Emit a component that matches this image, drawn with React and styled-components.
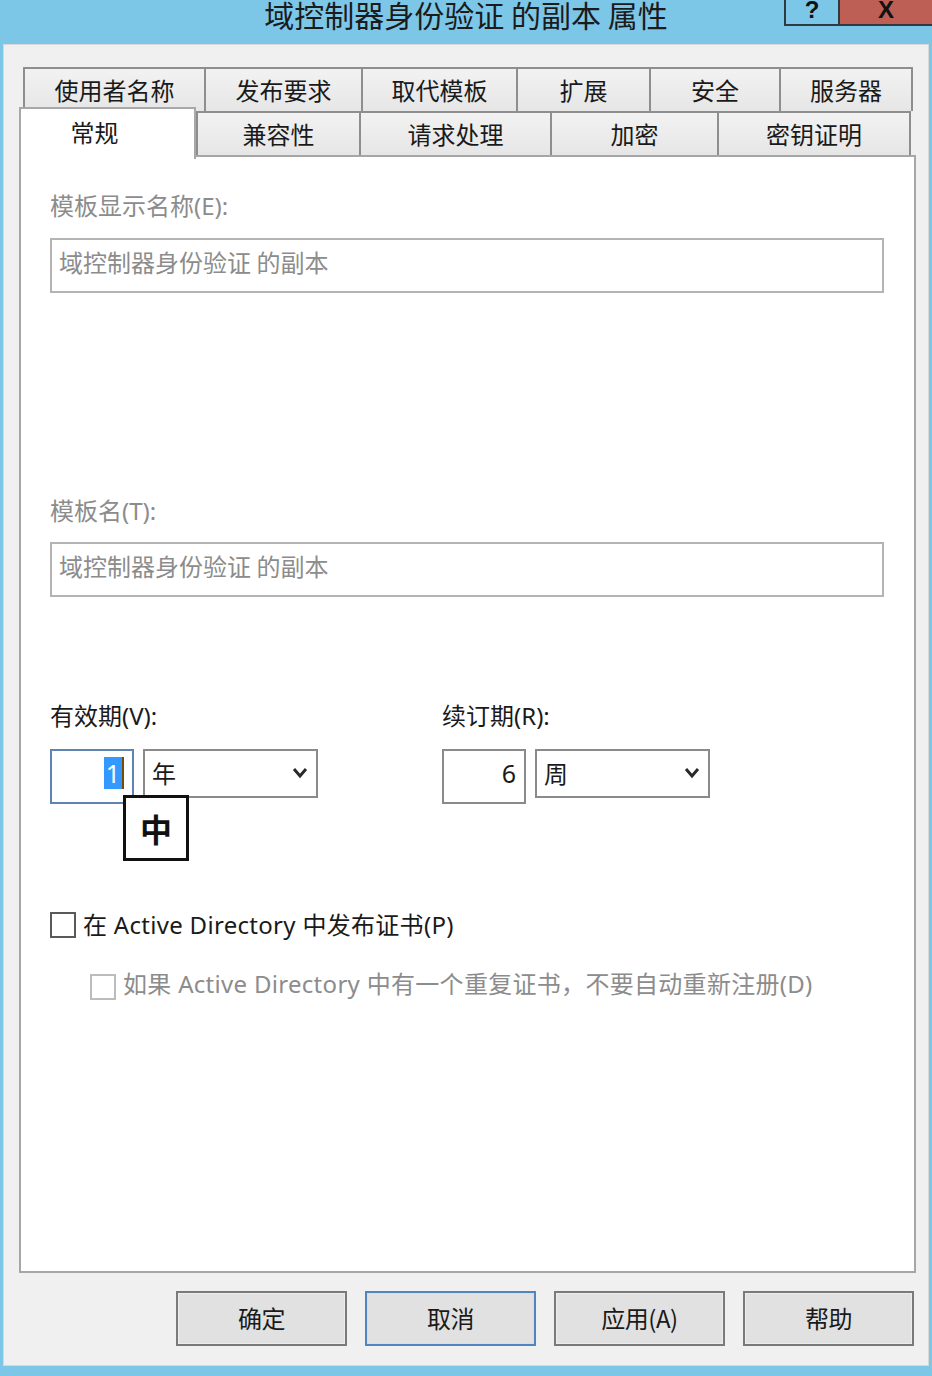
import React from 'react'
import styled, { createGlobalStyle } from 'styled-components'

const GlobalStyle = createGlobalStyle`
  html, body {
    margin: 0;
    padding: 0;
    background: #7cc7e8;
  }
  body {
    font-family: "Noto Sans", "Noto Sans CJK SC", sans-serif;
  }
`

const Window = styled.div`
  width: 932px;
  height: 1376px;
  display: flex;
  flex-direction: column;
  background: #7cc7e8;
  overflow: hidden;
`

const TitleBar = styled.div`
  height: 44px;
  position: relative;
  display: flex;
  justify-content: center;
`

const TitleText = styled.div`
  font-family: "Noto Sans CJK SC", sans-serif;
  font-size: 30px;
  line-height: 30px;
  color: #1b1b1b;
  margin-top: -1px;
`

const Caption = styled.div`
  position: absolute;
  top: -3px;
  right: 0;
  display: flex;
`

const CaptionButton = styled.div`
  width: ${(p) => p.w}px;
  height: 29px;
  box-sizing: border-box;
  background: ${(p) => (p.close ? '#bd5f55' : '#7cc7e8')};
  border: 2px solid #2e3a40;
  border-left-width: ${(p) => (p.close ? '0' : '2px')};
  border-right-width: ${(p) => (p.close ? '0' : '2px')};
  display: flex;
  align-items: flex-start;
  justify-content: center;
  font-family: "Liberation Sans", sans-serif;
  font-weight: bold;
  font-size: 24px;
  line-height: 22px;
  color: #111;
`

const Client = styled.div`
  flex: 1;
  margin: 0 3px 10px 3px;
  background: #f0f0f0;
  border: 1px solid #d8d8d8;
  display: flex;
  flex-direction: column;
`

const TabStrip = styled.div`
  margin-top: 22px;
  padding-left: 15px;
  display: flex;
  flex-direction: column;
`

const TabRow = styled.div`
  display: flex;
  padding-left: ${(p) => p.indent || 0}px;
  position: relative;
  z-index: ${(p) => p.z || 0};
`

const Tab = styled.div`
  width: ${(p) => p.w}px;
  height: 44px;
  box-sizing: border-box;
  border: 2px solid #8e8e8e;
  border-bottom: none;
  margin-left: ${(p) => (p.first ? '0' : '-2px')};
  background: linear-gradient(#f2f2f2, #e6e6e6);
  font-family: "Noto Sans CJK SC", sans-serif;
  font-size: 24px;
  color: #1a1a1a;
  display: flex;
  align-items: center;
  justify-content: center;
  padding-bottom: 2px;
`

const ActiveTab = styled.div`
  width: ${(p) => p.w}px;
  height: 52px;
  margin-top: -4px;
  margin-bottom: -6px;
  box-sizing: border-box;
  border: 2px solid #a8a8a8;
  border-bottom: none;
  background: #ffffff;
  font-family: "Noto Sans CJK SC", sans-serif;
  font-size: 24px;
  color: #1a1a1a;
  display: flex;
  justify-content: center;
  padding-top: 5px;
  padding-right: 26px;
  position: relative;
  z-index: 2;
`

const Panel = styled.div`
  margin-left: 15px;
  width: 897px;
  height: 1118px;
  box-sizing: border-box;
  border: 2px solid #a6a6a6;
  background: #ffffff;
  padding: 0 30px 0 29px;
  display: flex;
  flex-direction: column;
  position: relative;
`

const Label = styled.div`
  font-family: "Noto Sans", "Noto Sans CJK SC", sans-serif;
  font-size: 24px;
  line-height: 30px;
  color: ${(p) => (p.disabled ? '#8c8c8c' : '#1a1a1a')};
  margin-top: ${(p) => p.top || 0}px;
`

const TextBox = styled.div`
  margin-top: ${(p) => p.top}px;
  height: 55px;
  box-sizing: border-box;
  border: 2px solid #b4b4b4;
  padding: 0 7px;
  display: flex;
  align-items: center;
  padding-bottom: 8px;
  font-family: "Noto Sans CJK SC", sans-serif;
  font-size: 24px;
  color: #8c8c8c;
`

const PeriodRow = styled.div`
  margin-top: ${(p) => p.top}px;
  display: flex;
  position: relative;
`

const PeriodGroup = styled.div`
  width: 392px;
  display: flex;
  flex-direction: column;
`

const Controls = styled.div`
  margin-top: 18px;
  display: flex;
  align-items: flex-start;
  gap: 9px;
  position: relative;
`

const SpinBox = styled.div`
  width: 84px;
  height: 55px;
  box-sizing: border-box;
  border: 2px solid ${(p) => (p.focused ? '#5f84b0' : '#8a8a8a')};
  display: flex;
  align-items: flex-start;
  justify-content: flex-end;
  padding: 6px 8px 0 0;
  font-family: "Noto Sans", sans-serif;
  font-size: 25px;
  line-height: 32px;
  color: #1a1a1a;
`

const Selected = styled.span`
  background: #3399ff;
  color: #ffffff;
  padding: 0 2px;
  border-right: 2px solid #7a4a00;
  line-height: 32px;
  height: 32px;
  display: inline-block;
`

const Combo = styled.div`
  width: 175px;
  height: 49px;
  box-sizing: border-box;
  border: 2px solid #8a8a8a;
  display: flex;
  align-items: center;
  justify-content: space-between;
  padding: 0 8px 2px 7px;
  font-family: "Noto Sans CJK SC", sans-serif;
  font-size: 24px;
  color: #1a1a1a;
`

const ImeBadge = styled.div`
  position: absolute;
  left: 73px;
  top: 46px;
  width: 66px;
  height: 66px;
  box-sizing: border-box;
  border: 3px solid #111;
  background: #ffffff;
  display: flex;
  align-items: center;
  justify-content: center;
  font-family: "Noto Sans CJK SC", sans-serif;
  font-weight: bold;
  font-size: 32px;
  color: #111;
  z-index: 3;
`

const CheckRow = styled.div`
  margin-top: ${(p) => p.top}px;
  margin-left: ${(p) => p.indent || 0}px;
  display: flex;
  align-items: center;
  gap: 7px;
  font-family: "Noto Sans", "Noto Sans CJK SC", sans-serif;
  font-size: 24px;
  letter-spacing: 0.3px;
  line-height: 30px;
  color: ${(p) => (p.disabled ? '#8c8c8c' : '#1a1a1a')};
`

const CheckBox = styled.div`
  width: 26px;
  height: 26px;
  box-sizing: border-box;
  border: 2px solid ${(p) => (p.disabled ? '#bcbcbc' : '#5a5a5a')};
  background: #ffffff;
  margin-top: ${(p) => (p.disabled ? '6px' : '0')};
`

const ButtonBar = styled.div`
  margin-top: 18px;
  padding-left: 172px;
  display: flex;
  gap: 18px;
`

const Button = styled.div`
  width: 171px;
  height: 55px;
  box-sizing: border-box;
  border: 2px solid ${(p) => (p.primary ? '#4f86c0' : '#7a7a7a')};
  box-shadow: inset 0 0 0 1px ${(p) => (p.primary ? '#cfe0f2' : '#ececec')};
  background: #e1e1e1;
  display: flex;
  align-items: center;
  justify-content: center;
  padding-bottom: 3px;
  font-family: "Noto Sans CJK SC", sans-serif;
  font-size: 24px;
  letter-spacing: -0.5px;
  color: #1a1a1a;
`

function Chevron() {
  return (
    <svg width="16" height="12" viewBox="0 0 16 12">
      <polyline points="2,2 8,9 14,2" fill="none" stroke="#2a2a2a" strokeWidth="3" />
    </svg>
  )
}

const topTabs = [
  ['使用者名称', 183],
  ['发布要求', 159],
  ['取代模板', 157],
  ['扩展', 135],
  ['安全', 132],
  ['服务器', 134],
]

const bottomTabs = [
  ['兼容性', 165],
  ['请求处理', 193],
  ['加密', 169],
  ['密钥证明', 194],
]

export default function App() {
  return (
    <Window>
      <GlobalStyle />
      <TitleBar>
        <TitleText>域控制器身份验证 的副本 属性</TitleText>
        <Caption>
          <CaptionButton w={56}>?</CaptionButton>
          <CaptionButton w={92} close>X</CaptionButton>
        </Caption>
      </TitleBar>
      <Client>
        <TabStrip>
          <TabRow indent={6}>
            {topTabs.map(([t, w]) => (
              <Tab key={t} w={w}>{t}</Tab>
            ))}
          </TabRow>
          <TabRow z={1}>
            <ActiveTab w={177}>常规</ActiveTab>
            {bottomTabs.map(([t, w], i) => (
              <Tab key={t} w={w} first={i === 0}>{t}</Tab>
            ))}
          </TabRow>
        </TabStrip>
        <Panel>
          <Label disabled top={34}>模板显示名称(E):</Label>
          <TextBox top={17}>域控制器身份验证 的副本</TextBox>
          <Label disabled top={203}>模板名(T):</Label>
          <TextBox top={16}>域控制器身份验证 的副本</TextBox>
          <PeriodRow top={104}>
            <PeriodGroup>
              <Label>有效期(V):</Label>
              <Controls>
                <SpinBox focused><Selected>1</Selected></SpinBox>
                <Combo>年<Chevron /></Combo>
                <ImeBadge>中</ImeBadge>
              </Controls>
            </PeriodGroup>
            <PeriodGroup>
              <Label>续订期(R):</Label>
              <Controls>
                <SpinBox>6</SpinBox>
                <Combo>周<Chevron /></Combo>
              </Controls>
            </PeriodGroup>
          </PeriodRow>
          <CheckRow top={106}>
            <CheckBox />
            <span>在 Active Directory 中发布证书(P)</span>
          </CheckRow>
          <CheckRow disabled top={28} indent={40}>
            <CheckBox disabled />
            <span>如果 Active Directory 中有一个重复证书，不要自动重新注册(D)</span>
          </CheckRow>
        </Panel>
        <ButtonBar>
          <Button>确定</Button>
          <Button primary>取消</Button>
          <Button>应用(A)</Button>
          <Button>帮助</Button>
        </ButtonBar>
      </Client>
    </Window>
  )
}
